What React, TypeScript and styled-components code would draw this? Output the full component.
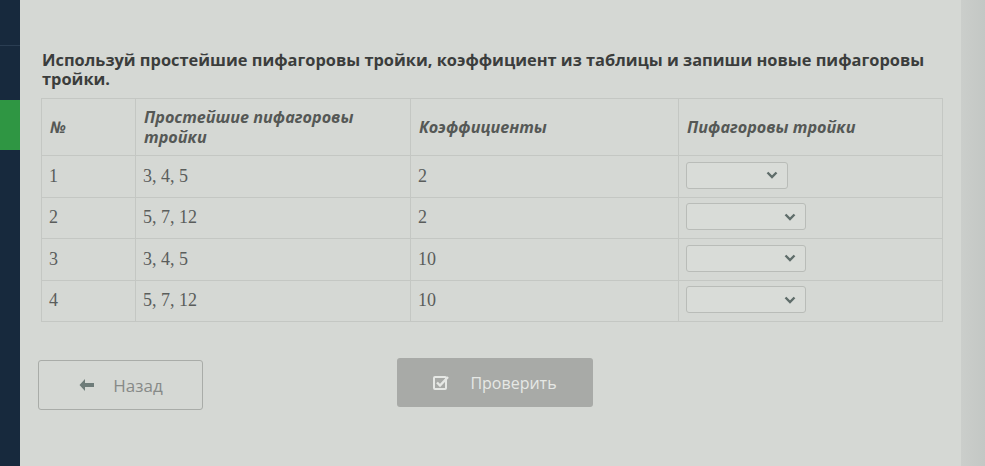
import styled, { createGlobalStyle } from "styled-components";

const GlobalStyle = createGlobalStyle`
  html, body {
    margin: 0;
    padding: 0;
    background: #d3d6d2;
  }
  body {
    font-family: "Open Sans", "Liberation Sans", sans-serif;
  }
`;

const Page = styled.div`
  display: flex;
  width: 985px;
  height: 466px;
  overflow: hidden;
`;

const Sidebar = styled.div`
  width: 20px;
  flex-shrink: 0;
  background: #17293d;
  display: flex;
  flex-direction: column;
`;

const SideTop = styled.div`
  height: 45px;
  border-bottom: 1px solid #2a3d52;
`;

const SideGap = styled.div`
  height: 54px;
`;

const SideActive = styled.div`
  height: 50px;
  background: #2f9643;
`;

const Main = styled.div`
  flex: 1;
  background: #d5d8d4;
  padding: 50px 18px 0 21px;
  box-sizing: border-box;
`;

const RightStrip = styled.div`
  width: 25px;
  flex-shrink: 0;
  background: linear-gradient(90deg, #cbcecb, #c3c7c4);
`;

const Title = styled.div`
  font-size: 16.4px;
  font-weight: 700;
  line-height: 19px;
  color: #3b3d3c;
  padding-left: 1px;
  margin-bottom: 10px;
`;

const Table = styled.div`
  display: grid;
  grid-template-columns: 94px 275px 268px 264px;
  width: 901px;
  border-top: 1px solid #c4c7c3;
  border-left: 1px solid #c4c7c3;
`;

const HeadCell = styled.div`
  height: 57px;
  box-sizing: border-box;
  padding: 0 8px;
  display: flex;
  align-items: center;
  font-size: 16.2px;
  font-weight: 700;
  font-style: italic;
  line-height: 20px;
  color: #555856;
  border-right: 1px solid #c4c7c3;
  border-bottom: 1px solid #c4c7c3;
`;

const HeadText = styled.span`
  max-width: 230px;
`;

const Cell = styled.div`
  height: 41.5px;
  box-sizing: border-box;
  padding: 0 7px;
  display: flex;
  align-items: center;
  font-family: "Liberation Serif", "DejaVu Serif", serif;
  font-size: 18px;
  color: #5a5d5b;
  border-right: 1px solid #c4c7c3;
  border-bottom: 1px solid #c4c7c3;
`;

const SelectBox = styled.div<{ $width: number }>`
  width: ${({ $width }) => $width}px;
  height: 27px;
  box-sizing: border-box;
  border: 1px solid #b9bcb8;
  border-radius: 3px;
  background: #d9dcd8;
  display: flex;
  align-items: center;
  justify-content: flex-end;
  padding-right: 9px;
  margin-top: -2px;
`;

const Chevron = () => (
  <svg width="12" height="8" viewBox="0 0 12 8">
    <path d="M1.5 1.5 L6 6 L10.5 1.5" fill="none" stroke="#5f6d6a" strokeWidth="2.4" />
  </svg>
);

const Actions = styled.div`
  display: flex;
  align-items: flex-start;
  gap: 194px;
  margin-top: 36px;
  margin-left: -3px;
`;

const BackButton = styled.div`
  width: 165px;
  height: 50px;
  box-sizing: border-box;
  border: 1px solid #a9aca8;
  border-radius: 3px;
  display: flex;
  align-items: center;
  justify-content: center;
  gap: 18px;
  font-size: 17px;
  color: #878a88;
  margin-top: 2px;
`;

const CheckButton = styled.div`
  width: 196px;
  height: 49px;
  box-sizing: border-box;
  border-radius: 3px;
  background: #a8aaa7;
  display: flex;
  align-items: center;
  justify-content: center;
  gap: 20px;
  font-size: 16px;
  color: #e6e8e5;
`;

const ArrowIcon = () => (
  <svg width="17" height="14" viewBox="0 0 17 14">
    <path d="M7 1 L1.5 7 L7 13 L7 9 L16 9 L16 5 L7 5 Z" fill="#6e7c79" />
  </svg>
);

const CheckIcon = () => (
  <svg width="17" height="15" viewBox="0 0 17 15">
    <rect x="1" y="2" width="12" height="12" rx="1" fill="none" stroke="#e6e8e5" strokeWidth="2" />
    <path d="M4 7.5 L7 10.5 L15 2" fill="none" stroke="#e6e8e5" strokeWidth="2.4" />
  </svg>
);

const rows = [
  { n: "1", triple: "3, 4, 5", k: "2", w: 102 },
  { n: "2", triple: "5, 7, 12", k: "2", w: 120 },
  { n: "3", triple: "3, 4, 5", k: "10", w: 120 },
  { n: "4", triple: "5, 7, 12", k: "10", w: 120 },
];

export default function App() {
  return (
    <Page>
      <GlobalStyle />
      <Sidebar>
        <SideTop />
        <SideGap />
        <SideActive />
      </Sidebar>
      <Main>
        <Title>
          Используй простейшие пифагоровы тройки, коэффициент из таблицы и запиши новые пифагоровы
          тройки.
        </Title>
        <Table>
          <HeadCell>№</HeadCell>
          <HeadCell>
            <HeadText>Простейшие пифагоровы тройки</HeadText>
          </HeadCell>
          <HeadCell>Коэффициенты</HeadCell>
          <HeadCell>Пифагоровы тройки</HeadCell>
          {rows.map((r) => (
            <>
              <Cell key={r.n + "a"}>{r.n}</Cell>
              <Cell key={r.n + "b"}>{r.triple}</Cell>
              <Cell key={r.n + "c"}>{r.k}</Cell>
              <Cell key={r.n + "d"}>
                <SelectBox $width={r.w}>
                  <Chevron />
                </SelectBox>
              </Cell>
            </>
          ))}
        </Table>
        <Actions>
          <BackButton>
            <ArrowIcon />
            Назад
          </BackButton>
          <CheckButton>
            <CheckIcon />
            Проверить
          </CheckButton>
        </Actions>
      </Main>
      <RightStrip />
    </Page>
  );
}
